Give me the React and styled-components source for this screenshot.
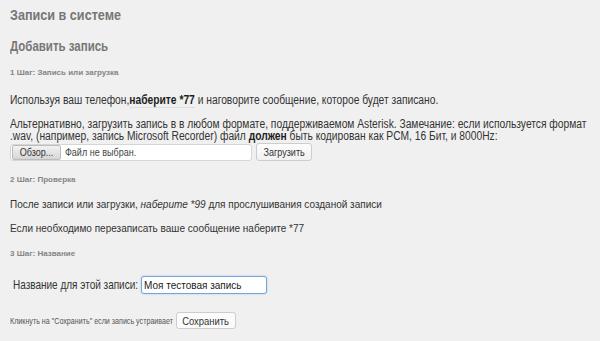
import React from "react";
import styled, { createGlobalStyle } from "styled-components";

// The page was rendered with a narrow Arial; Liberation Sans is squeezed to match it.
const NARROW = 0.82;

const Global = createGlobalStyle`
  html, body {
    margin: 0;
    padding: 0;
    background: #f0f0f0;
    overflow: hidden;
  }
  body {
    font-family: "Liberation Sans", Arial, sans-serif;
    color: #333;
  }
`;

const Page = styled.div`
  width: 600px;
  height: 341px;
  padding: 5px 10px 0 10px;
  box-sizing: border-box;
  overflow: hidden;
`;

const Narrow = styled.div`
  width: ${(p) => p.$w || 730}px;
  transform: scaleX(${(p) => p.$scale || NARROW});
  transform-origin: 0 0;
  margin-top: ${(p) => p.$top || 0}px;
`;

const Squeeze = styled.span`
  display: inline-block;
  white-space: nowrap;
  transform: scaleX(${NARROW});
  transform-origin: ${(p) => p.$origin || "left"} center;
`;

const Title = styled.h1`
  margin: 0;
  font-size: 15.4px;
  line-height: 20px;
  font-weight: bold;
  color: #767676;
`;

const SubTitle = styled.h2`
  margin: 0;
  font-size: 14px;
  line-height: 16px;
  font-weight: bold;
  color: #777;
`;

const Step = styled.h5`
  margin: ${(p) => p.$top}px 0 0 0;
  font-size: 8px;
  line-height: 10px;
  font-weight: bold;
  color: #858585;
`;

const Text = styled.p`
  margin: 0;
  font-size: 12px;
  line-height: 12px;
  color: #333;
  white-space: nowrap;

  b {
    color: #1e1e1e;
  }
`;

const Dial = styled.b`
  border-bottom: 1px dotted #cfcfcf;
`;

const Plain = styled.p`
  margin: ${(p) => p.$top}px 0 0 0;
  font-size: 10px;
  line-height: 12px;
  color: #333;
`;

const Row = styled.div`
  display: flex;
  align-items: center;
  gap: ${(p) => p.$gap || 4}px;
  margin-top: ${(p) => p.$top || 0}px;
  padding-left: ${(p) => p.$indent || 0}px;
`;

const FileBox = styled.div`
  width: 242px;
  height: 17px;
  box-sizing: border-box;
  display: flex;
  align-items: center;
  background: #fff;
  border: 1px solid #d6d6d6;
  border-radius: 3px;
  padding-left: 1px;
`;

const Btn = styled.button`
  width: ${(p) => p.$w}px;
  height: ${(p) => p.$h || 18}px;
  box-sizing: border-box;
  padding: 0;
  display: flex;
  align-items: center;
  justify-content: center;
  font-family: "Liberation Sans", Arial, sans-serif;
  font-size: ${(p) => p.$size || 11}px;
  color: #333;
  background: ${(p) => (p.$flat ? "#fbfbfb" : "linear-gradient(#fdfdfd, #f1f1f1)")};
  border: 1px solid #cdcdcd;
  border-radius: 3px;
  overflow: visible;
`;

const BrowseBtn = styled(Btn)`
  background: linear-gradient(#f2f2f2, #d6d6d6);
  border-color: #bcbcbc;
  border-radius: 2px;
`;

const FileName = styled.span`
  width: 80px;
  margin-left: 4px;
  font-size: 11px;
  color: #444;
`;

const Label = styled.label`
  width: 124px;
  font-size: 12.2px;
  color: #333;
`;

const NameInput = styled.input`
  width: 126px;
  height: 18px;
  box-sizing: border-box;
  padding: 0 2px;
  font-family: "Liberation Sans", Arial, sans-serif;
  font-size: 10px;
  color: #222;
  background: #fff;
  border: 1px solid #76a3dc;
  border-radius: 3px;
  box-shadow: 0 0 2px #a8c5ee;
  outline: none;
`;

const Tiny = styled.span`
  width: 162px;
  font-size: 8.7px;
  color: #555;
`;

export default function App() {
  return (
    <Page>
      <Global />
      <Narrow $w={300}>
        <Title>Записи в системе</Title>
      </Narrow>
      <Narrow $w={300} $top={13}>
        <SubTitle>Добавить запись</SubTitle>
      </Narrow>
      <Step $top={14}>1 Шаг: Запись или загрузка</Step>

      <Narrow $top={16} $scale={0.855} $w={700}>
        <Text>
          Используя ваш телефон,<Dial>наберите *77</Dial> и наговорите сообщение, которое будет записано.
        </Text>
      </Narrow>
      <Narrow $top={12} $scale={0.855} $w={700}>
        <Text>
          Альтернативно, загрузить запись в в любом формате, поддерживаемом Asterisk. Замечание: если используется формат
          <br />
          .wav, (например, запись Microsoft Recorder) файл <b>должен</b> быть кодирован как PCM, 16 Бит, и 8000Hz:
        </Text>
      </Narrow>
      <Row $top={1} $gap={4}>
        <FileBox>
          <BrowseBtn $w={49} $h={15}>
            <Squeeze $origin="center">Обзор...</Squeeze>
          </BrowseBtn>
          <FileName>
            <Squeeze>Файл не выбран.</Squeeze>
          </FileName>
        </FileBox>
        <Btn $w={56}>
          <Squeeze $origin="center">Загрузить</Squeeze>
        </Btn>
      </Row>

      <Step $top={14}>2 Шаг: Проверка</Step>
      <Plain $top={14}>
        После записи или загрузки, <i>наберите *99</i> для прослушивания созданой записи
      </Plain>
      <Plain $top={12}>Если необходимо перезаписать ваше сообщение наберите *77</Plain>

      <Step $top={14}>3 Шаг: Название</Step>
      <Row $top={17} $gap={4} $indent={3}>
        <Label>
          <Squeeze>Название для этой записи:</Squeeze>
        </Label>
        <NameInput defaultValue="Моя тестовая запись" />
      </Row>
      <Row $top={18} $gap={4}>
        <Tiny>
          <Squeeze>Кликнуть на "Сохранить" если запись устраивает</Squeeze>
        </Tiny>
        <Btn $w={60} $h={17} $size={11.5} $flat>
          <Squeeze $origin="center">Сохранить</Squeeze>
        </Btn>
      </Row>
    </Page>
  );
}
